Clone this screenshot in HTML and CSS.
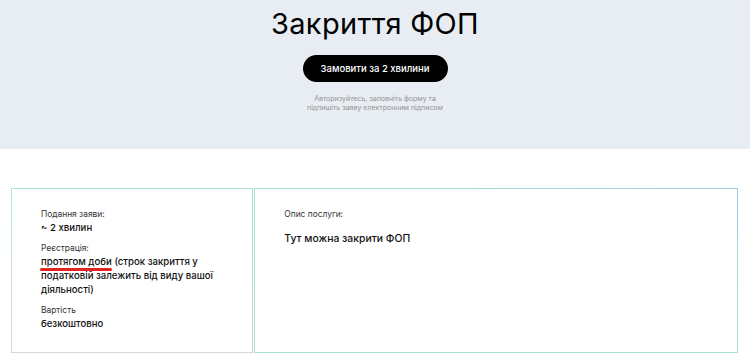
FILE: index.html
```html
<!DOCTYPE html>
<html lang="uk">
<head>
    <meta charset="UTF-8">
    <meta name="viewport" content="width=device-width, initial-scale=1.0">
    <title>Закриття ФОП</title>
    <link rel="stylesheet" href="styles.css">
</head>
<body>
    <!-- Hero -->
    <header class="hero">
        <h1>Закриття ФОП</h1>
        <a class="order-btn" href="#">Замовити за 2 хвилини</a>
        <p class="hint">Авторизуйтесь, заповніть форму та<br>підпишіть заяву електронним підписом</p>
    </header>

    <!-- Service info -->
    <section class="service">
        <div class="card card-facts">
            <div class="fact">
                <span class="label">Подання заяви:</span>
                <span class="value">~ 2 хвилин</span>
            </div>
            <div class="fact">
                <span class="label">Реєстрація:</span>
                <p class="value marked">протягом доби (строк закриття у податковій залежить від виду вашої діяльності)</p>
            </div>
            <div class="fact">
                <span class="label">Вартість</span>
                <span class="value">безкоштовно</span>
            </div>
        </div>
        <div class="card card-desc">
            <span class="label">Опис послуги:</span>
            <p class="desc">Тут можна закрити ФОП</p>
        </div>
    </section>
</body>
</html>
```

FILE: styles.css
```css
body {
    margin: 0;
    font-family: Inter, "Noto Sans", sans-serif;
    color: #000;
    background: #fff;
}
.hero {
    background-color: #e8edf3;
    text-align: center;
    padding: 9px 0 37px;
}
.hero h1 {
    margin: 0;
    font-size: 29px;
    font-weight: 400;
    line-height: 29px;
    letter-spacing: 0.3px;
}
.order-btn {
    display: inline-block;
    margin-top: 17px;
    width: 145px;
    height: 27px;
    line-height: 27px;
    border-radius: 14px;
    background: #000;
    color: #fff;
    font-size: 9.5px;
    font-weight: 500;
    text-decoration: none;
}
.hint {
    margin: 12px 0 0;
    font-size: 7px;
    line-height: 9px;
    color: #939393;
}
.service {
    display: grid;
    grid-template-columns: 1fr 2fr;
    margin: 39px 12px 0 11px;
}
.card {
    border: 1px solid;
    padding: 19px 29px 21px;
}
.card-facts {
    border-image: linear-gradient(to bottom, #a9e6d5, #d9d4da) 1;
    display: flex;
    flex-direction: column;
    gap: 7px;
}
.card-desc {
    border-image: linear-gradient(200deg, #9cc8ea, #a8e2d8 30%, #a8e2d8) 1;
    margin-left: 1px;
}
.fact {
    display: flex;
    flex-direction: column;
}
.label {
    display: block;
    font-size: 8.4px;
    line-height: 13px;
    color: #333;
}
.value {
    margin: 0;
    font-size: 9.6px;
    line-height: 14px;
    font-weight: 500;
    color: #111;
}
/* red highlight under "протягом доби" */
.marked {
    position: relative;
}
.marked::after {
    content: "";
    position: absolute;
    left: -1px;
    top: 13px;
    width: 72px;
    height: 2.5px;
    border-radius: 2px;
    background: #e3231f;
}
.desc {
    margin: 11px 0 0;
    font-size: 10.4px;
    line-height: 14px;
    font-weight: 500;
    color: #111;
}
```
